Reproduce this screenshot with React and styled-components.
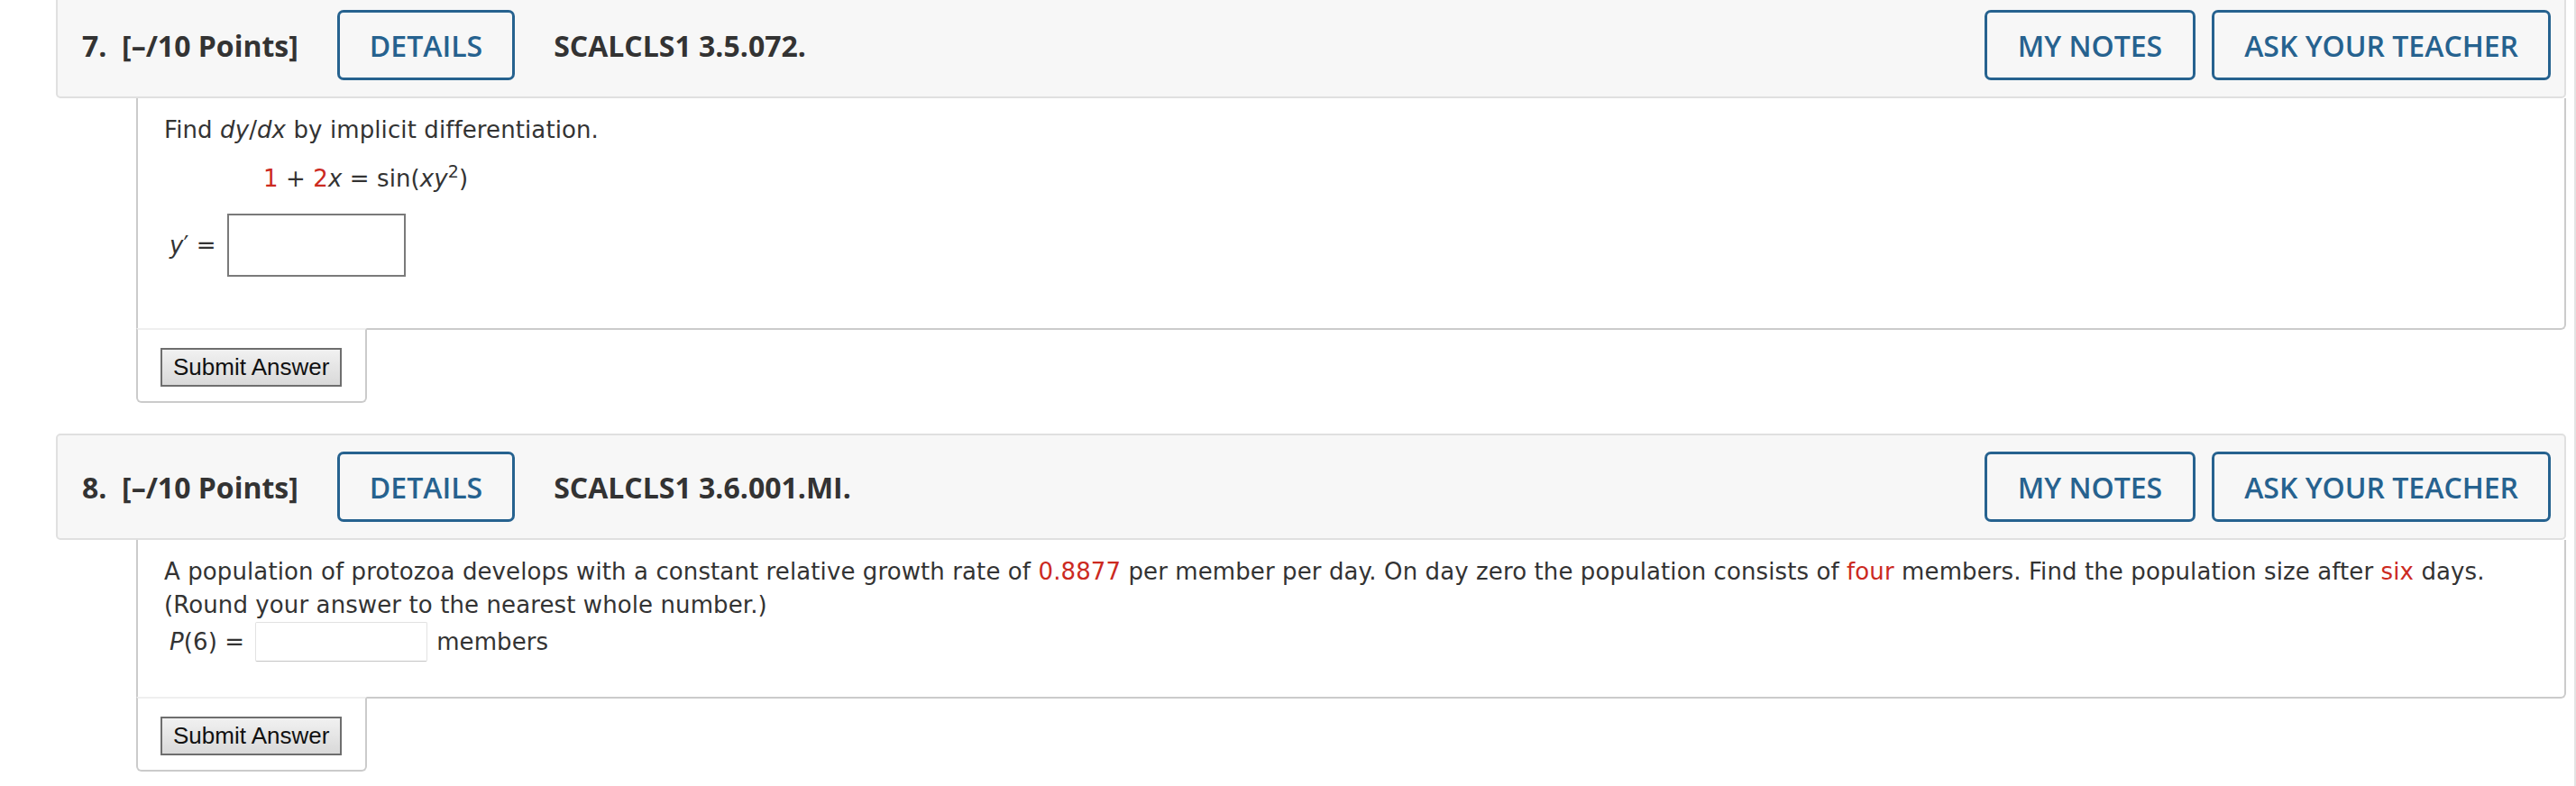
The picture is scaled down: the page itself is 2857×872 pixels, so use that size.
import styled, { createGlobalStyle } from 'styled-components'

const GlobalStyle = createGlobalStyle`
    html, body {
        margin: 0;
        padding: 0;
        background: #fff;
    }
`

const Page = styled.div`
    box-sizing: border-box;
    min-height: 100vh;
    padding: 0 9px 0 62px;
    border-right: 2px solid #e3e3e3;
    overflow: hidden;
`

const Question = styled.section`
    &:first-child {
        margin-top: -9px;
    }
    & + & {
        margin-top: 34px;
    }
`

const Header = styled.div`
    box-sizing: border-box;
    height: 118px;
    display: flex;
    align-items: center;
    padding: 0 15px 0 27px;
    background: #f7f7f7;
    border: 2px solid #e0e0e0;
    border-radius: 5px;
    font-family: "Open Sans", "Liberation Sans", sans-serif;
    color: #333;
`

const Label = styled.span`
    font-size: 32px;
    font-weight: 700;
    margin-right: 43px;
    white-space: pre;
`

const Title = styled.span`
    font-size: 32px;
    font-weight: 700;
    margin-left: 43px;
`

const OutlineButton = styled.button`
    box-sizing: border-box;
    height: 78px;
    padding: 0 ${p => p.$pad || 33}px;
    background: transparent;
    border: 3px solid #26628f;
    border-radius: 7px;
    color: #26628f;
    font-family: "Open Sans", "Liberation Sans", sans-serif;
    font-size: 32px;
    font-weight: 600;
    cursor: pointer;
`

const Actions = styled.div`
    margin-left: auto;
    display: flex;
    gap: 18px;
`

const Body = styled.div`
    margin-left: 89px;
    padding: 17px 30px ${p => p.$bottom}px 29px;
    background: #fff;
    border: 2px solid #cbcbcb;
    border-top: none;
    border-bottom-right-radius: 6px;
    font-family: "DejaVu Sans", Verdana, sans-serif;
    font-size: 26px;
    letter-spacing: 0.1px;
    line-height: 37px;
    color: #333;
`

const Text = styled.p`
    margin: 0;
`

const Equation = styled.p`
    margin: 17px 0 0;
    padding-left: 110px;
`

const AnswerRow = styled.div`
    display: flex;
    align-items: center;
    margin-top: ${p => p.$top || 0}px;
    padding-left: 6px;
    gap: ${p => p.$gap || 12}px;
`

const BoxInput = styled.input`
    box-sizing: border-box;
    width: 198px;
    height: 70px;
    border: 2px solid #7a7a7a;
    background: #fff;
    font-size: 26px;
`

const LineInput = styled.input`
    box-sizing: border-box;
    width: 191px;
    height: 44px;
    border: 1px solid #e2e2e2;
    border-bottom-color: #c4c4c4;
    border-radius: 2px;
    background: #fff;
    font-size: 26px;
`

const Red = styled.span`
    color: #cc2a1f;
`

const Var = styled.i``

const Sup = styled.sup`
    font-size: 19px;
    line-height: 0;
`

const Unit = styled.span`
    margin-left: -2px;
`

const SubmitTab = styled.div`
    box-sizing: border-box;
    width: 256px;
    margin: -2px 0 0 89px;
    padding: 20px 0 16px 25px;
    background: #fff;
    border: 2px solid #cbcbcb;
    border-top-color: #efefef;
    border-radius: 0 0 6px 6px;
`

const SubmitButton = styled.button`
    box-sizing: border-box;
    height: 43px;
    padding: 0 12px;
    border: 2px solid #6e6e6e;
    background: linear-gradient(#f1f1f1, #d9d9d9);
    color: #111;
    font-family: "Liberation Sans", Arial, sans-serif;
    font-size: 26px;
    cursor: pointer;
`

const QuestionHeader = ({ number, code }) => (
    <Header>
        <Label>{`${number}.  [–/10 Points]`}</Label>
        <OutlineButton $pad={33}>DETAILS</OutlineButton>
        <Title>{code}</Title>
        <Actions>
            <OutlineButton $pad={34}>MY NOTES</OutlineButton>
            <OutlineButton $pad={33}>ASK YOUR TEACHER</OutlineButton>
        </Actions>
    </Header>
)

const App = () => {
    return (
        <>
            <GlobalStyle />
            <Page>
                <Question>
                    <QuestionHeader number={7} code="SCALCLS1 3.5.072." />
                    <Body $bottom={57}>
                        <Text>
                            Find <Var>dy</Var>/<Var>dx</Var> by implicit differentiation.
                        </Text>
                        <Equation>
                            <Red>1</Red> + <Red>2</Red><Var>x</Var> = sin(<Var>xy</Var><Sup>2</Sup>)
                        </Equation>
                        <AnswerRow $top={20} $gap={12}>
                            <span><Var>y</Var>′ =</span>
                            <BoxInput type="text" />
                        </AnswerRow>
                    </Body>
                    <SubmitTab>
                        <SubmitButton>Submit Answer</SubmitButton>
                    </SubmitTab>
                </Question>

                <Question>
                    <QuestionHeader number={8} code="SCALCLS1 3.6.001.MI." />
                    <Body $bottom={39}>
                        <Text>
                            A population of protozoa develops with a constant relative growth rate of <Red>0.8877</Red> per member per day. On day zero the population consists of <Red>four</Red> members. Find the population size after <Red>six</Red> days.
                            <br />
                            (Round your answer to the nearest whole number.)
                        </Text>
                        <AnswerRow $gap={12}>
                            <span><Var>P</Var>(6) =</span>
                            <LineInput type="text" />
                            <Unit>members</Unit>
                        </AnswerRow>
                    </Body>
                    <SubmitTab>
                        <SubmitButton>Submit Answer</SubmitButton>
                    </SubmitTab>
                </Question>
            </Page>
        </>
    )
}

export default App
